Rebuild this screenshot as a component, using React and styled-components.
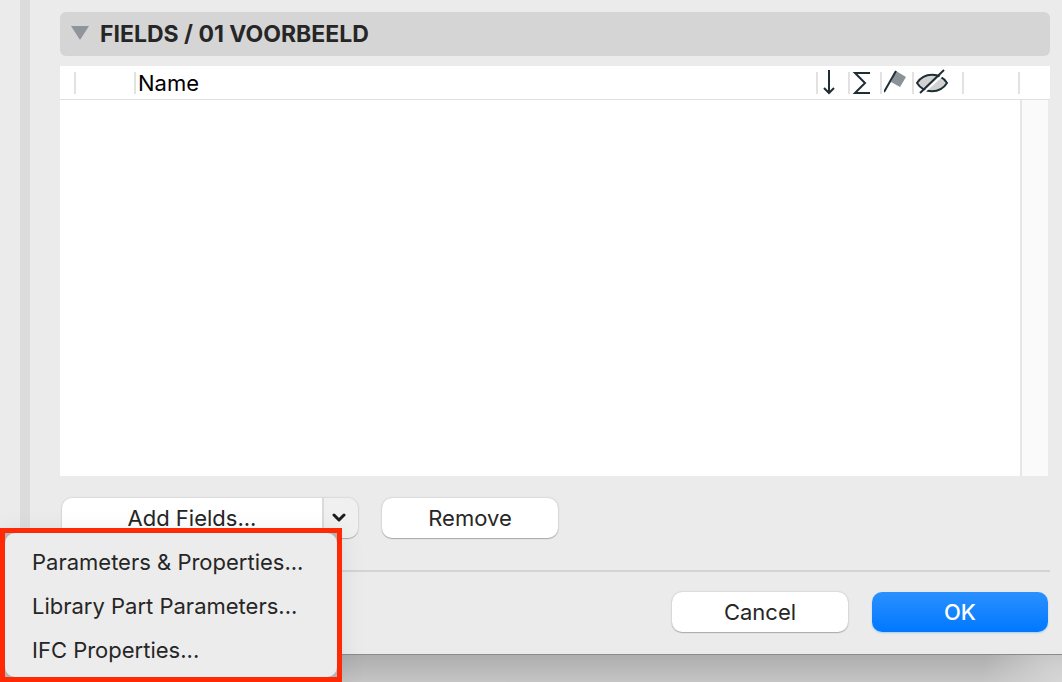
import React from "react";
import styled, { createGlobalStyle } from "styled-components";

const GlobalStyle = createGlobalStyle`
  *, *::before, *::after { box-sizing: border-box; }
  body { margin: 0; overflow: hidden; font-family: Inter, "Liberation Sans", sans-serif; color: #262626; }
`;

const Page = styled.div`
  display: flex;
  flex-direction: column;
  min-height: 100vh;
  padding-bottom: 27px;
  background:
    radial-gradient(circle at 100% 100%, #d6d6d6, transparent 80px),
    linear-gradient(to top, #c4c4c4, #adadad 28px);
`;

const Dialog = styled.div`
  flex: 1;
  display: flex;
  background: #ebebeb;
  border-bottom: 1px solid #8c8c8c;
`;

const Sidebar = styled.div`
  flex: 0 0 20px;
`;

const Splitter = styled.div`
  flex: 0 0 10px;
  background: #dcdcdc;
`;

const Main = styled.main`
  flex: 1;
  min-width: 0;
  display: flex;
  flex-direction: column;
  padding: 12px 12px 22px 30px;
`;

const PanelHeader = styled.button`
  display: flex;
  align-items: center;
  gap: 11px;
  height: 44px;
  padding: 0 11px;
  border: 0;
  border-radius: 6px;
  background: #d5d5d5;
  color: #262626;
  font: 700 23px/28px Inter, "Liberation Sans", sans-serif;
  text-align: left;
`;

const FieldList = styled.section`
  flex: 1;
  display: flex;
  flex-direction: column;
  margin: 10px 0 22px;
`;

const HeaderTable = styled.table`
  width: 100%;
  table-layout: fixed;
  border-collapse: separate;
  border-spacing: 0;
  background: #fff;
`;

const HeadCell = styled.th`
  width: ${(p) => p.$width || "auto"};
  height: 34px;
  padding: 0 0 0 4px;
  border-bottom: 1px solid #e0e0e0;
  background: ${(p) => (p.$plain ? "none" : "linear-gradient(#e2e2e2, #e2e2e2) 0 6px / 2px 22px no-repeat")};
  color: #000;
  font-size: 22px;
  font-weight: 400;
  line-height: 28px;
  text-align: left;

  svg { display: block; }
`;

const ListBody = styled.div`
  flex: 1;
  display: flex;
  justify-content: flex-end;
  margin-right: 2px;
  background: #fff;
`;

const ScrollTrack = styled.div`
  width: 28px;
  border-left: 2px solid #e6e6e6;
  background: #fafafa;
`;

const Actions = styled.div`
  display: flex;
  gap: 24px;
  padding: 0 2px;
`;

const PushButton = styled.button`
  width: 176px;
  height: 40px;
  padding: 0;
  border: 0;
  border-radius: 10px;
  background: ${(p) => (p.$primary ? "linear-gradient(#2b90ff, #0078ff)" : "#fff")};
  box-shadow: ${(p) => (p.$primary ? "0 1px 2px #a9c8ec" : "0 0 2px #b4b4b4, 0 1px 1px #a8a8a8")};
  color: ${(p) => (p.$primary ? "#fff" : "#262626")};
  font: ${(p) => (p.$primary ? 500 : 400)} 22px/28px Inter, "Liberation Sans", sans-serif;
`;

const SplitButton = styled.div`
  position: relative;
  display: flex;
  height: 40px;
  border-radius: 10px;
  box-shadow: 0 0 2px #b4b4b4, 0 1px 1px #a8a8a8;
`;

const SplitMain = styled.button`
  width: 260px;
  padding: 0;
  border: 0;
  border-radius: 10px 0 0 10px;
  background: #fff;
  color: #262626;
  font: 400 22px/28px Inter, "Liberation Sans", sans-serif;
`;

const SplitToggle = styled.button`
  display: grid;
  place-items: center;
  width: 36px;
  padding: 0 4px 0 0;
  border: 0;
  border-left: 2px solid #dadada;
  border-radius: 0 10px 10px 0;
  background: #f0f0f0;
`;

const MenuFrame = styled.div`
  position: absolute;
  top: 30px;
  left: -62px;
  z-index: 1;
  width: 342px;
  border: 5px solid #ff2a05;
  background: #b4b4b4;
  box-shadow: 0 4px 24px rgba(0, 0, 0, 0.08);
`;

const Menu = styled.div`
  padding: 7px 0 5px;
  border-radius: 10px;
  background: #ececec;
`;

const MenuItem = styled.button`
  display: block;
  width: 100%;
  height: 44px;
  padding: 0 27px;
  border: 0;
  background: none;
  color: #262626;
  font: 400 22px/28px Inter, "Liberation Sans", sans-serif;
  text-align: left;
  white-space: nowrap;
`;

const Divider = styled.hr`
  width: 100%;
  height: 2px;
  margin: 32px 0 20px;
  border: 0;
  background: #d3d3d3;
`;

const Footer = styled.footer`
  display: flex;
  justify-content: flex-end;
  gap: 24px;
  padding: 0 2px;
`;

const menuItems = ["Parameters & Properties...", "Library Part Parameters...", "IFC Properties..."];

const ArrowIcon = () => (
  <svg width="28" height="28" viewBox="0 0 28 28" fill="none" stroke="#1f2d35" strokeWidth="2" role="img" aria-label="Sort">
    <path d="M9 1v23M4 19l5 5 5-5" />
  </svg>
);

const SumIcon = () => (
  <svg width="28" height="28" viewBox="0 0 28 28" fill="none" stroke="#1f2d35" strokeWidth="2" role="img" aria-label="Sum">
    <path d="M18 4H3l10 10L3 24h15" />
  </svg>
);

const FlagIcon = () => (
  <svg width="28" height="28" viewBox="0 0 28 28" role="img" aria-label="Flag">
    <path d="M12 2l10 6-6 10-9-5z" fill="#8b9399" />
    <path d="M12 2L0 23" fill="none" stroke="#1f2d35" strokeWidth="2" />
  </svg>
);

const HiddenIcon = () => (
  <svg width="34" height="28" viewBox="0 0 34 28" fill="none" stroke="#1f2d35" strokeWidth="2" role="img" aria-label="Hidden">
    <path d="M1 14C8 3 24 3 31 14C24 25 8 25 1 14z" fill="#d2d2d2" />
    <path d="M6 25L30 3" stroke="#fff" />
    <path d="M4 24L28 1" />
  </svg>
);

export default function App() {
  return (
    <>
      <GlobalStyle />
      <Page>
        <Dialog role="dialog" aria-label="Fields">
          <Sidebar />
          <Splitter />
          <Main>
            <PanelHeader type="button" aria-expanded="true">
              <svg width="18" height="18" viewBox="0 0 18 18" aria-hidden="true">
                <path d="M0 1h18L9 15z" fill="#8f959a" />
              </svg>
              FIELDS / 01 VOORBEELD
            </PanelHeader>

            <FieldList>
              <HeaderTable>
                <thead>
                  <tr>
                    <HeadCell $width="14px" $plain />
                    <HeadCell $width="60px" />
                    <HeadCell>Name</HeadCell>
                    <HeadCell $width="32px"><ArrowIcon /></HeadCell>
                    <HeadCell $width="32px"><SumIcon /></HeadCell>
                    <HeadCell $width="32px"><FlagIcon /></HeadCell>
                    <HeadCell $width="50px"><HiddenIcon /></HeadCell>
                    <HeadCell $width="56px" />
                    <HeadCell $width="32px" />
                  </tr>
                </thead>
              </HeaderTable>
              <ListBody>
                <ScrollTrack />
              </ListBody>
            </FieldList>

            <Actions>
              <SplitButton>
                <SplitMain type="button">Add Fields...</SplitMain>
                <SplitToggle type="button" aria-label="More field types" aria-expanded="true">
                  <svg width="14" height="10" viewBox="0 0 14 10" fill="none" stroke="#1c1c1c" strokeWidth="3" strokeLinecap="round" strokeLinejoin="round" aria-hidden="true">
                    <path d="M2 2l5 5 5-5" />
                  </svg>
                </SplitToggle>
                <MenuFrame>
                  <Menu role="menu">
                    {menuItems.map((label) => (
                      <MenuItem key={label} type="button" role="menuitem">{label}</MenuItem>
                    ))}
                  </Menu>
                </MenuFrame>
              </SplitButton>
              <PushButton type="button">Remove</PushButton>
            </Actions>

            <Divider />

            <Footer>
              <PushButton type="button">Cancel</PushButton>
              <PushButton type="button" $primary>OK</PushButton>
            </Footer>
          </Main>
        </Dialog>
      </Page>
    </>
  );
}
